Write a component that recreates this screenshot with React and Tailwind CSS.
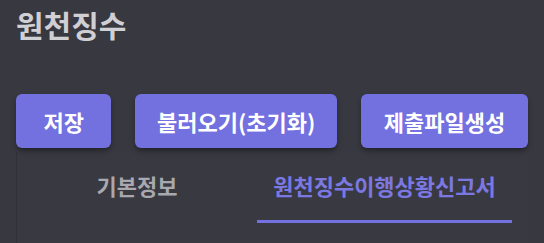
import React, { useState } from 'react';

const font = { fontFamily: '"Noto Sans CJK KR", "Noto Sans", sans-serif' };

const tabs = [
  { id: 'basic', label: '기본정보', width: 'w-[240px]' },
  { id: 'report', label: '원천징수이행상황신고서', width: 'w-[255px]' },
];

export default function App() {
  const [active, setActive] = useState('report');

  return (
    <div className="min-h-screen bg-[#383841] px-4 pt-[6px]" style={font}>
      <h1 className="text-[30px] leading-[36px] font-bold text-[#cfcfd4]">원천징수</h1>

      {/* Actions */}
      <div className="mt-[52px] flex gap-6">
        <button className="h-[54px] w-[96px] rounded-md bg-[#7370df] text-[22px] font-bold text-white shadow-md shadow-black/30">
          저장
        </button>
        <button className="h-[54px] w-[203px] rounded-md bg-[#7370df] text-[22px] font-bold text-white shadow-md shadow-black/30">
          불러오기(초기화)
        </button>
        <button className="h-[54px] w-[168px] rounded-md bg-[#7370df] text-[22px] font-bold text-white shadow-md shadow-black/30">
          제출파일생성
        </button>
      </div>

      {/* Tabs panel */}
      <div className="mt-1 h-[91px] border-l border-[#313139] bg-[#393942]">
        <div className="flex">
          {tabs.map((t) => {
            const isActive = active === t.id;
            return (
              <button
                key={t.id}
                onClick={() => setActive(t.id)}
                className={`${t.width} flex h-[71px] flex-col items-center`}
              >
                <span
                  className={`pt-[18px] text-[22px] leading-[30px] font-bold ${
                    isActive ? 'text-[#7b78e2]' : 'text-[#a8a8ae]'
                  }`}
                >
                  {t.label}
                </span>
                <span className={`mt-auto h-[3px] w-full ${isActive ? 'bg-[#7370df]' : ''}`} />
              </button>
            );
          })}
        </div>
      </div>
    </div>
  );
}
